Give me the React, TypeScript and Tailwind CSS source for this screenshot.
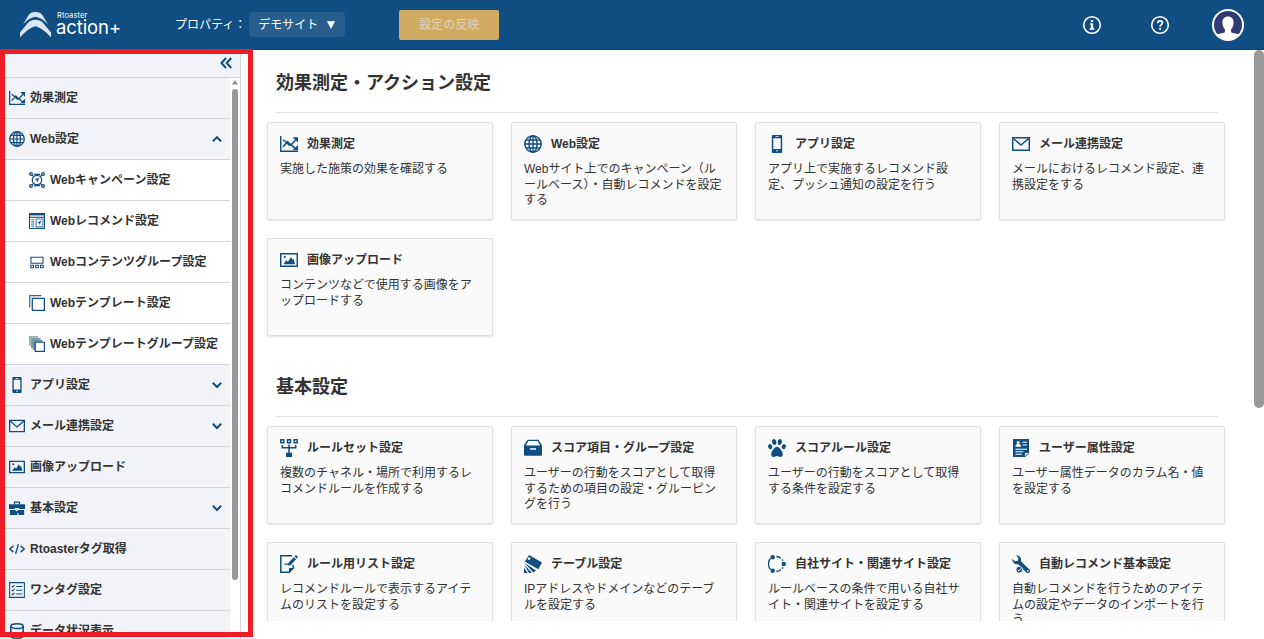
import type { ReactNode } from "react";

const icons: Record<string, ReactNode> = {
  chart: (
    <g fill="none" stroke="currentColor" strokeWidth="1.5">
      <path d="M.7 1v15.2H18" />
      <path d="M3 4.8l6.2 5.3h2.300l3.600 3M3 12l4.500-5.300 3.600 3.300 4.400-5" />
      <path d="M12.600 2.200H18v5.400zM18 9.900v5h-5.200z" fill="currentColor" stroke="none" />
    </g>
  ),
  globe: (
    <g fill="none" stroke="currentColor" strokeWidth="1.4">
      <circle cx="9" cy="9" r="8.2" />
      <ellipse cx="9" cy="9" rx="4" ry="8.2" />
      <path d="M9 .8v16.4M.8 9h16.4M2 5h14M2 13h14" />
    </g>
  ),
  phone: (
    <path
      fillRule="evenodd"
      fill="currentColor"
      d="M5 0h8a1.200 1.200 0 0 1 1.200 1.200v15.600a1.200 1.200 0 0 1-1.200 1.200H5a1.200 1.200 0 0 1-1.200-1.200V1.200A1.200 1.200 0 0 1 5 0zM5.300 3.200v10.900h7.400V3.200zM7.500 1.200v.8h3v-.8zM8.300 15.200v1.300h1.400v-1.300z"
    />
  ),
  mail: (
    <g fill="none" stroke="currentColor" strokeWidth="1.5">
      <path d="M.7 2.700h16.600v12.600H.7z" />
      <path d="M1 3.200l8 6.800 8-6.800" />
    </g>
  ),
  image: (
    <g>
      <path d="M.7 2.700h16.600v12.600H.7z" fill="none" stroke="currentColor" strokeWidth="1.5" />
      <path d="M3.500 13.200l2.700-4 1.800 1.500 3-4.700 1.600 2.800 1-.8 1.500 5.200z" fill="currentColor" />
      <circle cx="4.8" cy="6" r="1.1" fill="currentColor" />
    </g>
  ),
  campaign: (
    <g fill="none" stroke="currentColor" strokeWidth="1.4">
      <circle cx="9" cy="9" r="5.3" />
      <circle cx="2.2" cy="2.2" r="1.5" />
      <circle cx="15.8" cy="2.2" r="1.5" />
      <circle cx="2.2" cy="15.8" r="1.5" />
      <circle cx="15.8" cy="15.8" r="1.5" />
      <path d="M3.300 3.300l2 2M14.700 3.300l-2 2M3.300 14.700l2-2M14.700 14.700l-2-2M5.500 2.800h7M5.500 15.200h7" />
      <path d="M11.800 6.200L6.200 8.800l2.400.6.6 2.400z" fill="currentColor" stroke="none" />
    </g>
  ),
  recommend: (
    <g fill="none" stroke="currentColor" strokeWidth="1.2">
      <path d="M.6.6h16.800v16.800H.6z" />
      <path d="M.6 1.800h16.800" strokeWidth="1.8" />
      <path d="M.6 4.800h16.800" />
      <path d="M2.500 7.500h3.500M2.500 10h3.500M2.500 12.500h3.500M2.500 15h3.500M8 6.800h7.600v8.800H8z" opacity=".75" />
      <path d="M14 8.500l-4.500 2.300 1.900.6.500 2z" fill="currentColor" stroke="none" />
    </g>
  ),
  contents: (
    <g fill="none" stroke="currentColor" strokeWidth="1.2">
      <path d="M2.200 3.600h13.600v6.800H2.200zM2 12.600h3v2.800H2zM7.500 12.600h3v2.800h-3zM13 12.600h3v2.800h-3z" />
    </g>
  ),
  template: (
    <g fill="none" stroke="currentColor" strokeWidth="1.4">
      <path d="M.8 14V.8H14" opacity=".85" />
      <path d="M3.700 3.700h13.600v13.600H3.700z" />
    </g>
  ),
  templateGroup: (
    <g>
      <path d="M0 0h10.500v2H2v9H0z" fill="#8fb0b0" />
      <path d="M2.300 2.300H13v2.300H4.600v9.200H2.300z" fill="#8499a5" />
      <path d="M4.300 4.500h11v2.300H6.800V16H4.300z" fill="#6f98ad" />
      <path d="M7 7h10.300v10.300H7z" fill="#fff" stroke="currentColor" strokeWidth="1.3" />
    </g>
  ),
  briefcase: (
    <g fill="currentColor">
      <path d="M5.500 1.800h7v3h-1.400V3.200H6.900v1.600H5.500z" />
      <path d="M0 4.800h18v5.400h-6.500V9h-5v1.200H0zM1 11.200h6l1.800 1.600 1.400-1.600H17v5.600h-5.500l-2.300-3 .4 3H1z" />
    </g>
  ),
  code: (
    <g fill="none" stroke="currentColor" strokeWidth="1.6">
      <path d="M5 5.500L1 9l4 3.500M13 5.500L17 9l-4 3.500M10.600 3.500L7.400 14.500" />
    </g>
  ),
  checklist: (
    <g fill="none" stroke="currentColor" strokeWidth="1.2">
      <path d="M.7.7h16.600v16.600H.7z" />
      <path d="M8 5h7M8 9.300h7M8 13.600h7M3.200 4.500l1.100 1.200L6.200 3.500M3.200 8.900l1.100 1.200 1.900-2.200M3.200 13.200l1.100 1.200 1.900-2.200" />
    </g>
  ),
  database: (
    <g fill="none" stroke="currentColor" strokeWidth="1.7">
      <ellipse cx="9" cy="3.6" rx="7" ry="2.7" />
      <path d="M2 3.600v10.800c0 1.500 3.100 2.700 7 2.700s7-1.200 7-2.700V3.600M2 9c0 1.500 3.100 2.700 7 2.700S16 10.500 16 9" />
    </g>
  ),
  ruleset: (
    <g>
      <path d="M.8.8h3v3h-3zM7.500.8h3v3h-3zM14.200.8h3v3h-3z" fill="none" stroke="currentColor" strokeWidth="1.5" />
      <path d="M2.300 6v2.800h13.400V6M9 5.500V14" fill="none" stroke="currentColor" strokeWidth="1.5" />
      <path d="M6 13.700h6V18H6z" fill="currentColor" />
    </g>
  ),
  drawer: (
    <path
      fillRule="evenodd"
      fill="currentColor"
      d="M3.600.7h10.800L18 6.300v9.500a1 1 0 0 1-1 1H1a1 1 0 0 1-1-1V6.300zM4.400 2L1.800 6.400h14.400L13.600 2zM6 9.300v1.500h6V9.300z"
    />
  ),
  paw: (
    <g fill="currentColor">
      <ellipse cx="2.2" cy="7.6" rx="2" ry="2.6" transform="rotate(-20 2.2 7.6)" />
      <ellipse cx="6.2" cy="3" rx="2.1" ry="3" transform="rotate(-8 6.2 3)" />
      <ellipse cx="11.8" cy="3" rx="2.1" ry="3" transform="rotate(8 11.8 3)" />
      <ellipse cx="15.8" cy="7.6" rx="2" ry="2.6" transform="rotate(20 15.8 7.6)" />
      <path d="M9 7.700c2.500 0 5.800 4.800 5.800 7.600 0 1.700-1 2.700-2.500 2.700-1.300 0-2-.9-3.300-.9s-2 .9-3.300.9c-1.500 0-2.500-1-2.500-2.700 0-2.800 3.300-7.600 5.800-7.600z" />
    </g>
  ),
  profile: (
    <g>
      <path d="M1 0h16v13.500L12.800 18H1z" fill="currentColor" />
      <path d="M17 13.500h-4.200V18z" fill="#fafafa" stroke="currentColor" strokeWidth=".8" />
      <circle cx="6.200" cy="3.600" r="1.5" fill="#fff" />
      <path d="M3.400 7.800c0-2 1.200-2.700 2.800-2.700S9 5.800 9 7.800z" fill="#fff" />
      <path d="M10.500 3.300H15M10.500 6H15M3.400 10.300H15M3.400 12.800h8M3.400 15.200h6.500" stroke="#fff" strokeWidth="1.1" />
    </g>
  ),
  edit: (
    <g>
      <path d="M12 .8H.8v16.400h8.500l3.900-4.300V9.800" fill="none" stroke="currentColor" strokeWidth="1.5" />
      <path d="M9 17.800V13h5zM16 0l2 1.900-1.300 1.500-2.200-2zM13.800 2.200l2.300 2.100-5.300 5.600-3 .8.7-3z" fill="currentColor" />
      <path d="M4.500 9.200h4.300" stroke="currentColor" strokeWidth="1.2" />
    </g>
  ),
  table: (
    <g fill="currentColor">
      <path
        fillRule="evenodd"
        d="M5 0l13 7.600-3.700 6.700L.8 6.400zM5 2.300a1.400 1.400 0 1 0 0 2.800 1.400 1.400 0 0 0 0-2.800z"
      />
      <path d="M0 7.500l12 8-2.600 1.900zM0 9.500l8 8.500H5zM0 13l3.700 5H0z" />
    </g>
  ),
  network: (
    <g>
      <g fill="none" stroke="currentColor" strokeWidth="1.4">
        <path d="M2.500 3.500A8.300 8.300 0 0 0 2.500 14.500" />
        <path d="M8.300 1.500a8 8 0 0 1 6.700 4.200M8.300 16.500a8 8 0 0 0 6.700-4.200" strokeDasharray="5 1.5" />
      </g>
      <circle cx="4.700" cy="2.200" r="2.200" fill="currentColor" />
      <circle cx="4.700" cy="15.800" r="2.200" fill="currentColor" />
      <circle cx="15.800" cy="9" r="2.200" fill="currentColor" />
    </g>
  ),
  tools: (
    <g>
      <path
        fill="currentColor"
        d="M4.200.3A4.800 4.800 0 0 1 9 6.300l8.300 8.200a2 2 0 0 1-2.900 2.900L6.200 9.200A4.800 4.800 0 0 1 .3 3.900L3 6.500l2.800-.7.600-2.600z"
      />
      <circle cx="7.200" cy="14.700" r="3.300" fill="currentColor" stroke="#fafafa" strokeWidth=".8" />
      <path d="M5.600 14.600l1.300 1.300 2.200-2.500" fill="none" stroke="#fff" strokeWidth="1" />
      <circle cx="15.800" cy="15.900" r=".8" fill="#fff" />
    </g>
  ),
};

function Icon({ name, className }: { name: string; className: string }) {
  return (
    <svg viewBox="0 0 18 18" className={className}>
      {icons[name]}
    </svg>
  );
}

type MenuItem = {
  label: string;
  icon: string;
  sub?: boolean;
  arrow?: "up" | "down";
};

const menu: MenuItem[] = [
  { label: "効果測定", icon: "chart" },
  { label: "Web設定", icon: "globe", arrow: "up" },
  { label: "Webキャンペーン設定", icon: "campaign", sub: true },
  { label: "Webレコメンド設定", icon: "recommend", sub: true },
  { label: "Webコンテンツグループ設定", icon: "contents", sub: true },
  { label: "Webテンプレート設定", icon: "template", sub: true },
  { label: "Webテンプレートグループ設定", icon: "templateGroup", sub: true },
  { label: "アプリ設定", icon: "phone", arrow: "down" },
  { label: "メール連携設定", icon: "mail", arrow: "down" },
  { label: "画像アップロード", icon: "image" },
  { label: "基本設定", icon: "briefcase", arrow: "down" },
  { label: "Rtoasterタグ取得", icon: "code" },
  { label: "ワンタグ設定", icon: "checklist" },
  { label: "データ状況表示", icon: "database" },
];

type CardData = { title: string; icon: string; text: string };

const sections: { title: string; cards: CardData[] }[] = [
  {
    title: "効果測定・アクション設定",
    cards: [
      { title: "効果測定", icon: "chart", text: "実施した施策の効果を確認する" },
      {
        title: "Web設定",
        icon: "globe",
        text: "Webサイト上でのキャンペーン（ルールベース）・自動レコメンドを設定する",
      },
      {
        title: "アプリ設定",
        icon: "phone",
        text: "アプリ上で実施するレコメンド設定、プッシュ通知の設定を行う",
      },
      {
        title: "メール連携設定",
        icon: "mail",
        text: "メールにおけるレコメンド設定、連携設定をする",
      },
      {
        title: "画像アップロード",
        icon: "image",
        text: "コンテンツなどで使用する画像をアップロードする",
      },
    ],
  },
  {
    title: "基本設定",
    cards: [
      {
        title: "ルールセット設定",
        icon: "ruleset",
        text: "複数のチャネル・場所で利用するレコメンドルールを作成する",
      },
      {
        title: "スコア項目・グループ設定",
        icon: "drawer",
        text: "ユーザーの行動をスコアとして取得するための項目の設定・グルーピングを行う",
      },
      {
        title: "スコアルール設定",
        icon: "paw",
        text: "ユーザーの行動をスコアとして取得する条件を設定する",
      },
      {
        title: "ユーザー属性設定",
        icon: "profile",
        text: "ユーザー属性データのカラム名・値を設定する",
      },
      {
        title: "ルール用リスト設定",
        icon: "edit",
        text: "レコメンドルールで表示するアイテムのリストを設定する",
      },
      {
        title: "テーブル設定",
        icon: "table",
        text: "IPアドレスやドメインなどのテーブルを設定する",
      },
      {
        title: "自社サイト・関連サイト設定",
        icon: "network",
        text: "ルールベースの条件で用いる自社サイト・関連サイトを設定する",
      },
      {
        title: "自動レコメンド基本設定",
        icon: "tools",
        text: "自動レコメンドを行うためのアイテムの設定やデータのインポートを行う",
      },
    ],
  },
];

function Header() {
  return (
    <header className="flex h-[50px] shrink-0 items-center border-b border-[#0d3f70] bg-[#104d82] pl-5 text-xs text-white">
      <div className="flex w-[155px] items-center gap-[5px]">
        <svg viewBox="0 0 31 26" className="h-[26px] w-[31px]" fill="#dbe6f3">
          <path d="M2.700 13L8.500 3.200C10 .8 12 0 15.500 0s5.500.8 7 3.200L28.300 13C25 9 21.500 6 15.500 4.800 9.500 6 6 9 2.700 13z" />
          <path d="M0 20.500l7-8.500c2.500-3 5-4.200 8.500-4.200s6 1.200 8.500 4.200l7 8.500v5c-4-5-9.500-9.500-15.500-11.300C9.500 16 4 20.500 0 25.500z" />
        </svg>
        <div className="flex flex-col pb-[3px] font-['Inter','Liberation_Sans',sans-serif]">
          <span className="pl-px text-[7.5px] leading-[9px] tracking-[0.1px]">Rtoaster</span>
          <span className="text-[18.5px] leading-[15px] tracking-[-0.1px]">action+</span>
        </div>
      </div>
      <span>プロパティ：</span>
      <div className="ml-[3px] flex h-[25px] w-24 items-center justify-between rounded bg-[#285e8e] pr-2 pl-[9px]">
        <span>デモサイト</span>
        <svg viewBox="0 0 8 8" className="mr-[2px] h-2 w-2" fill="#fff">
          <path d="M0 .3h8L4 8z" />
        </svg>
      </div>
      <button className="ml-[54px] h-[30px] w-[100px] rounded-[2px] bg-[#d0aa60] text-[#dcd3be]">
        設定の反映
      </button>
      <div className="ml-auto flex items-center pr-5">
        <svg viewBox="0 0 20 20" className="mr-12 h-5 w-5">
          <circle cx="10" cy="10" r="8.3" fill="none" stroke="#fff" strokeWidth="1.6" />
          <path d="M8.800 5h2.400v2H8.800zM8 8.200h3.200v5h1.100v1.500H7.700v-1.500h1.100V9.700H8z" fill="#fff" />
        </svg>
        <svg viewBox="0 0 20 20" className="mr-[42px] h-5 w-5" fill="none" stroke="#fff">
          <circle cx="10" cy="10" r="8.3" strokeWidth="1.6" />
          <path d="M7.700 8.200c0-1.500 1-2.400 2.400-2.400s2.300.8 2.300 2c0 1.700-2.300 1.900-2.300 3.900" strokeWidth="1.7" />
          <path d="M10.100 13v1.800" strokeWidth="1.9" />
        </svg>
        <svg viewBox="0 0 32 32" className="h-8 w-8">
          <circle cx="16" cy="16" r="16" fill="#fff" />
          <circle cx="16" cy="16" r="14" fill="#303b75" />
          <path
            fill="#fff"
            d="M16 7.500c3.500 0 5.600 2.300 5.600 6 0 3-1.100 5.500-2.500 6.700v2.500c0 1.600 5 1.700 8 2.700A15 15 0 0 1 16 31.500 15 15 0 0 1 4.900 25.400c3-1 8-1.100 8-2.700v-2.500c-1.400-1.200-2.500-3.700-2.500-6.700 0-3.700 2.100-6 5.600-6z"
          />
        </svg>
      </div>
    </header>
  );
}

function MenuRow({ item }: { item: MenuItem }) {
  return (
    <li
      className={`flex h-[41px] items-center border-b border-[#d4d6d9] pr-2 ${
        item.sub ? "bg-white pl-[29px]" : "bg-[#f2f3f8] pl-[9px]"
      }`}
    >
      <Icon name={item.icon} className="h-4 w-4 shrink-0 text-[#104d82]" />
      <span className="ml-[5px] grow whitespace-nowrap">{item.label}</span>
      {item.arrow && (
        <svg viewBox="0 0 10 10" className="h-2.5 w-2.5" fill="none" stroke="#104d82" strokeWidth="2">
          <path d={item.arrow === "up" ? "M.8 7.400L5 3.200l4.200 4.200" : "M.8 2.800L5 7l4.200-4.200"} />
        </svg>
      )}
    </li>
  );
}

function Sidebar() {
  return (
    <aside className="flex w-[241px] shrink-0 flex-col border-r border-[#cdd5e3] text-xs font-bold">
      <div className="flex h-7 shrink-0 items-center justify-end border-b border-[#d0d5df] bg-[#f2f3f8] pr-2 pb-px">
        <svg viewBox="0 0 12 12" className="h-3 w-3" fill="none" stroke="#104d82" strokeWidth="2">
          <path d="M6 1L1.500 6 6 11M11.200 1L6.700 6l4.500 5" />
        </svg>
      </div>
      <div className="flex min-h-0 grow">
        <ul className="w-[230px] overflow-hidden">
          {menu.map((item) => (
            <MenuRow key={item.label} item={item} />
          ))}
        </ul>
        <div className="flex grow flex-col items-center bg-white pt-[2px]">
          <svg viewBox="0 0 6 5" className="h-[5px] w-1.5" fill="#8c8c8c">
            <path d="M3 0l3 4.500H0z" />
          </svg>
          <div className="mt-1 h-[491px] w-1.5 rounded-full bg-[#999]" />
        </div>
      </div>
    </aside>
  );
}

function Card({ card }: { card: CardData }) {
  return (
    <div className="h-[98px] rounded-[2px] border border-[#dfe0e1] bg-[#fafafa] px-3 pt-3 shadow-[0_1px_2px_rgba(0,0,0,0.1)]">
      <div className="flex h-[18px] items-center gap-[9px]">
        <Icon name={card.icon} className="h-[18px] w-[18px] shrink-0 text-[#104d82]" />
        <h3 className="text-xs font-bold whitespace-nowrap">{card.title}</h3>
      </div>
      <p className="mt-[9px] text-xs leading-[15.6px] break-all">{card.text}</p>
    </div>
  );
}

export default function App() {
  return (
    <div className="relative flex h-[639px] w-[1264px] flex-col overflow-hidden bg-white font-['Liberation_Sans','Noto_Sans_CJK_JP',sans-serif] text-[#333]">
      <Header />
      <div className="flex min-h-0 grow">
        <Sidebar />
        <main className="h-[571px] grow overflow-hidden pl-[26px]">
          {sections.map((section) => (
            <section key={section.title} className="mb-[18px]">
              <div className="mr-9 ml-[9px] flex h-[63px] items-center border-b border-[#e2e2e2] pt-1">
                <h2 className="text-lg font-bold">{section.title}</h2>
              </div>
              <div className="mt-[9px] grid grid-cols-[repeat(4,226px)] gap-[18px]">
                {section.cards.map((card) => (
                  <Card key={card.title} card={card} />
                ))}
              </div>
            </section>
          ))}
        </main>
        <div className="h-[358px] w-2.5 shrink-0 rounded-full bg-[#999]" />
      </div>
      {/* highlight frame over the side menu */}
      <div className="pointer-events-none absolute top-[49px] left-0 h-[588px] w-[253px] border-[5px] border-[#ee1c25]" />
    </div>
  );
}
